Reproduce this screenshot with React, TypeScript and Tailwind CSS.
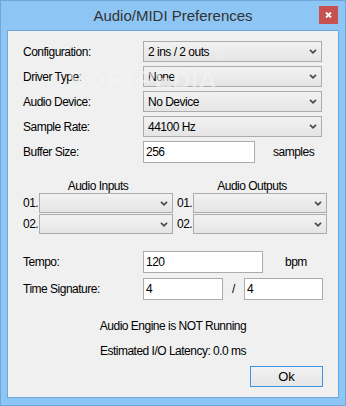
import React from 'react';

const Chevron: React.FC = () => (
  <svg width="8" height="5" viewBox="0 0 8 5" className="shrink-0">
    <path d="M1 0.8l3 3 3-3" stroke="#4a4a4a" strokeWidth="1.7" fill="none" />
  </svg>
);

const Select: React.FC<{ value?: string; className?: string }> = ({ value, className }) => (
  <div
    className={`flex items-center justify-between border border-[#acacac] bg-linear-to-b from-[#f2f2f2] to-[#e5e5e5] pl-[4px] pr-[4px] ${className ?? ''}`}
  >
    <span className="whitespace-nowrap">{value}</span>
    <Chevron />
  </div>
);

const TextBox: React.FC<{ value: string; className?: string }> = ({ value, className }) => (
  <div className={`flex items-center border border-[#acacac] bg-white pl-[2px] ${className ?? ''}`}>{value}</div>
);

export default function App() {
  return (
    // window frame
    <div className="w-[346px] h-[406px] bg-[#8dc6f4] border border-[#6ea7d8] flex flex-col text-[12px] tracking-[-0.5px] text-black font-['Liberation_Sans',Arial,sans-serif]">
      {/* title bar */}
      <header className="relative h-[29px] flex items-center justify-center">
        <h1 className="text-[15px] tracking-normal text-[#333] pt-[2px]">Audio/MIDI Preferences</h1>
        <button className="absolute right-[7px] top-[5px] w-[19px] h-[18px] bg-[#c75050] flex items-center justify-center">
          <svg width="7" height="6" viewBox="0 0 7 6">
            <path d="M1 0.5l5 5M6 0.5l-5 5" stroke="#fff" strokeWidth="1.8" />
          </svg>
        </button>
      </header>

      {/* client area */}
      <main className="relative flex-1 mx-[6px] mb-[7px] border border-[#6ea7d8] bg-[#f0f0f0] flex flex-col pt-[10px]">
        {/* device settings */}
        <section className="grid grid-cols-[120px_179px] gap-y-[4px] items-center pl-[15px]">
          <span>Configuration:</span>
          <Select value="2 ins / 2 outs" className="h-[21px]" />
          <span>Driver Type:</span>
          <Select value="None" className="h-[21px]" />
          <span>Audio Device:</span>
          <Select value="No Device" className="h-[21px]" />
          <span>Sample Rate:</span>
          <Select value="44100 Hz" className="h-[21px]" />
          <span>Buffer Size:</span>
          <div className="flex items-center">
            <TextBox value="256" className="w-[112px] h-[22px]" />
            <span className="ml-[18px]">samples</span>
          </div>
        </section>

        {/* audio i/o */}
        <section className="mt-[16px] flex gap-[4px] pl-[15px]">
          {['Audio Inputs', 'Audio Outputs'].map((title) => (
            <div key={title} className="w-[150px] flex flex-col">
              <p className="h-[14px] leading-[14px] text-center">{title}</p>
              <div className="flex items-center">
                <span className="w-[16px]">01.</span>
                <Select className="w-[134px] h-[20px]" />
              </div>
              <div className="flex items-center mt-[1px]">
                <span className="w-[16px]">02.</span>
                <Select className="w-[134px] h-[20px]" />
              </div>
            </div>
          ))}
        </section>

        {/* tempo */}
        <section className="mt-[17px] grid grid-cols-[120px_1fr] gap-y-[5px] items-center pl-[15px]">
          <span>Tempo:</span>
          <div className="flex items-center">
            <TextBox value="120" className="w-[120px] h-[22px]" />
            <span className="ml-[22px]">bpm</span>
          </div>
          <span>Time Signature:</span>
          <div className="flex items-center">
            <TextBox value="4" className="w-[80px] h-[22px]" />
            <span className="w-[21px] text-center">/</span>
            <TextBox value="4" className="w-[79px] h-[22px]" />
          </div>
        </section>

        {/* status */}
        <p className="mt-[18px] h-[16px] leading-[16px] text-center">Audio Engine is NOT Running</p>
        <p className="mt-[9px] h-[16px] leading-[16px] text-center">Estimated I/O Latency: 0.0 ms</p>

        <div className="mt-[7px] flex justify-end pr-[15px]">
          <button className="w-[73px] h-[21px] border border-[#3d95e6] bg-linear-to-b from-[#f2f2f2] to-[#e5e5e5] text-[13px] tracking-normal">
            Ok
          </button>
        </div>

        {/* watermark */}
        <div className="absolute left-[60px] top-[30px] pointer-events-none text-[26px] font-bold tracking-normal text-white/55 [text-shadow:0_0_1px_rgba(0,0,0,0.06)]">
          SOFTPEDIA<sup className="text-[9px] align-top">®</sup>
        </div>
      </main>
    </div>
  );
}
